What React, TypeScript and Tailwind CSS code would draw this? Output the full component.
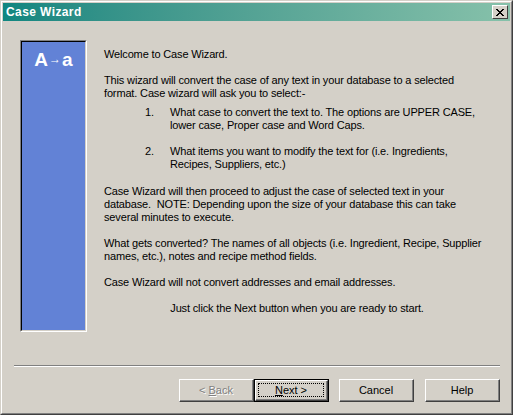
const font = { fontFamily: '"Liberation Sans", Arial, sans-serif' };

function Btn({ label, accel, rest, disabled, isDefault, className }: {
  label?: string;
  accel?: string;
  rest?: string;
  disabled?: boolean;
  isDefault?: boolean;
  className?: string;
}) {
  const text = (
    <span className={disabled ? 'text-[#808080] [text-shadow:1px_1px_0_#ffffff]' : 'text-black'}>
      {label}
      {accel && <span className="underline underline-offset-1">{accel}</span>}
      {rest}
    </span>
  );
  if (isDefault) {
    return (
      <div className={`w-[75px] h-[23px] border border-black ${className ?? ''}`}>
        <div className="w-full h-full border-t border-l border-white border-r border-b border-r-[#404040] border-b-[#404040]">
          <div className="w-full h-full border-r border-b border-[#808080] p-[2px]">
            <div className="w-full h-full border border-dotted border-black flex items-center justify-center text-[11px]">
              {text}
            </div>
          </div>
        </div>
      </div>
    );
  }
  return (
    <div className={`w-[75px] h-[23px] border-t border-l border-white border-r border-b border-r-[#404040] border-b-[#404040] ${className ?? ''}`}>
      <div className="w-full h-full border-r border-b border-[#808080] flex items-center justify-center text-[11px]">
        {text}
      </div>
    </div>
  );
}

export default function App() {
  return (
    <div
      className="w-[513px] h-[415px] bg-[#d4d0c8] border-t border-l border-[#d4d0c8] border-r border-b border-r-[#404040] border-b-[#404040] text-black"
      style={font}
    >
      <div className="w-full h-full border-t border-l border-white border-r border-b border-r-[#808080] border-b-[#808080] p-px flex flex-col">
        {/* title bar */}
        <div className="h-[18px] flex items-center bg-gradient-to-r from-[#0f8680] to-[#86c1aa]">
          <span className="ml-[3px] text-white font-bold text-[12px] leading-none tracking-[0.4px]">Case Wizard</span>
          <div className="ml-auto mr-[2px] w-[16px] h-[14px] bg-[#d4d0c8] border-t border-l border-white border-r border-b border-r-[#404040] border-b-[#404040] flex items-center justify-center">
            <svg width="8" height="7" viewBox="0 0 8 7" shapeRendering="crispEdges">
              <path d="M0 0h2v1h-2zM6 0h2v1h-2zM1 1h2v1h-2zM5 1h2v1h-2zM2 2h4v1h-4zM3 3h2v1h-2zM2 4h4v1h-4zM1 5h2v1h-2zM5 5h2v1h-2zM0 6h2v1h-2zM6 6h2v1h-2z" fill="#000" />
            </svg>
          </div>
        </div>

        {/* body */}
        <div className="flex mt-[19px] ml-[17px]">
          <div className="w-[67px] h-[292px] border-t border-l border-[#808080] border-r border-b border-r-white border-b-white shrink-0">
            <div className="w-full h-full border-t border-l border-black border-r border-b border-r-[#d4d0c8] border-b-[#d4d0c8] bg-[#6282d6] flex justify-center pt-[8px]">
              <div className="flex items-baseline text-white font-bold leading-none">
                <span className="text-[19px]">A</span>
                <span className="text-[12px] mx-[1px] relative -top-[3px]">→</span>
                <span className="text-[19px]">a</span>
              </div>
            </div>
          </div>

          <div className="ml-[17px] pt-[8px] text-[11px] leading-[13px] whitespace-nowrap tracking-[-0.15px] w-[386px]">
            <p>Welcome to Case Wizard.</p>
            <p className="mt-[13px]">
              This wizard will convert the case of any text in your database to a selected<br />
              format. Case wizard will ask you to select:-
            </p>
            <div className="mt-[6px] flex">
              <span className="ml-[41px] w-[25px]">1.</span>
              <p>
                What case to convert the text to. The options are UPPER CASE,<br />
                lower case, Proper case and Word Caps.
              </p>
            </div>
            <div className="mt-[13px] flex">
              <span className="ml-[41px] w-[25px]">2.</span>
              <p>
                What items you want to modify the text for (i.e. Ingredients,<br />
                Recipes, Suppliers, etc.)
              </p>
            </div>
            <p className="mt-[14px]">
              Case Wizard will then proceed to adjust the case of selected text in your<br />
              database.&nbsp; NOTE: Depending upon the size of your database this can take<br />
              several minutes to execute.
            </p>
            <p className="mt-[13px]">
              What gets converted? The names of all objects (i.e. Ingredient, Recipe, Supplier<br />
              names, etc.), notes and recipe method fields.
            </p>
            <p className="mt-[13px]">Case Wizard will not convert addresses and email addresses.</p>
            <p className="mt-[13px] text-center">Just click the Next button when you are ready to start.</p>
          </div>
        </div>

        {/* separator */}
        <div className="mt-[33px] ml-[11px] w-[486px] h-[2px] border-t border-[#808080] border-b border-b-white" />

        {/* buttons */}
        <div className="flex mt-[12px] ml-[176px]">
          <Btn label="< " accel="B" rest="ack" disabled />
          <Btn accel="N" rest="ext >" isDefault />
          <Btn label="Cancel" className="ml-[10px]" />
          <Btn label="Help" className="ml-[11px]" />
        </div>
      </div>
    </div>
  );
}
